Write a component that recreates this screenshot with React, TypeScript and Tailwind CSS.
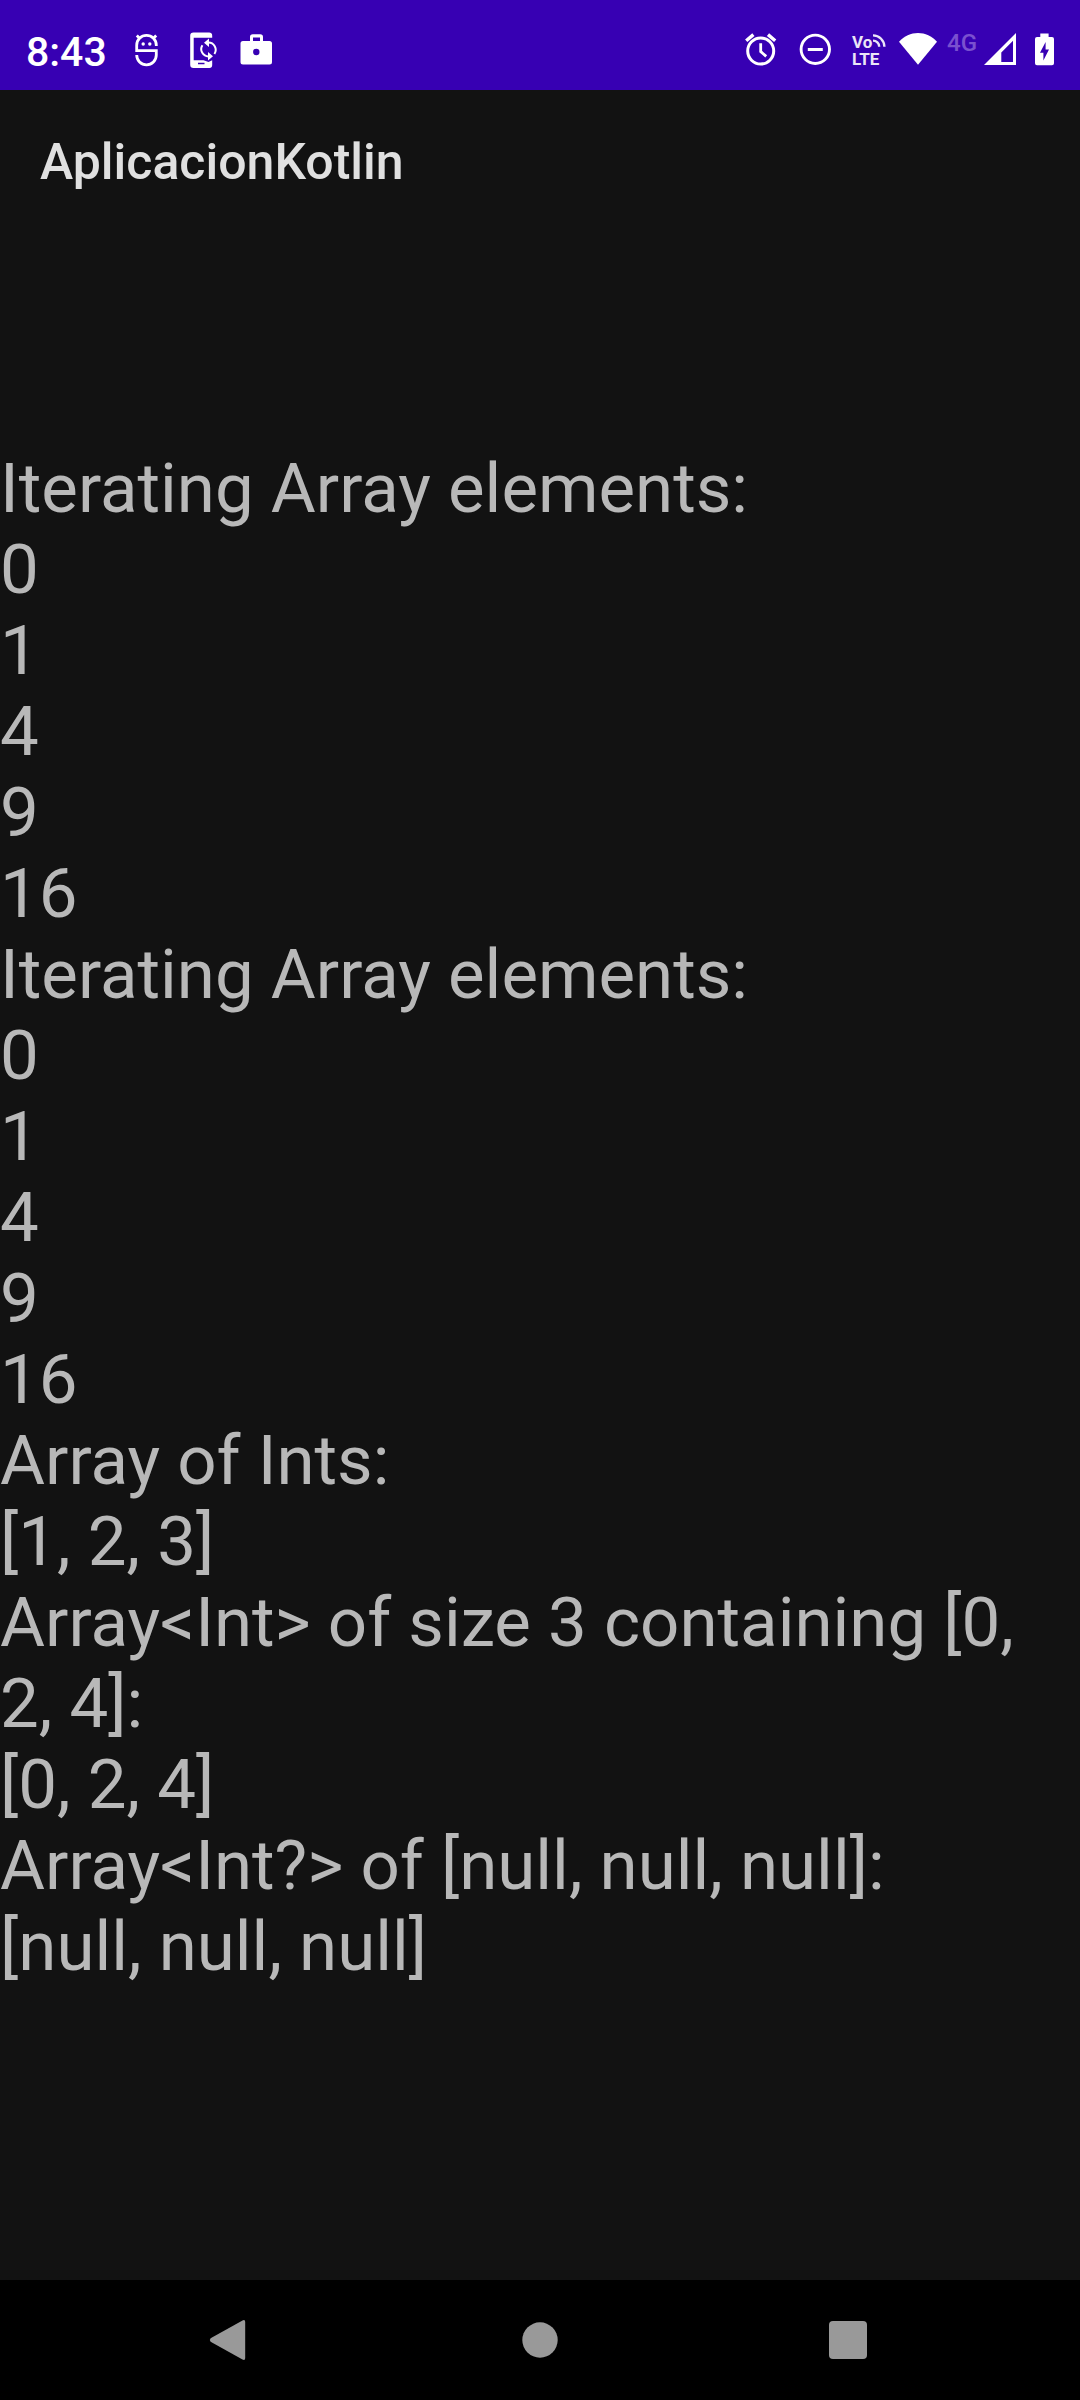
import type { ReactNode } from "react";

const lines = [
  "Iterating Array elements:",
  "0",
  "1",
  "4",
  "9",
  "16",
  "Iterating Array elements:",
  "0",
  "1",
  "4",
  "9",
  "16",
  "Array of Ints:",
  "[1, 2, 3]",
  "Array<Int> of size 3 containing [0, 2, 4]:",
  "[0, 2, 4]",
  "Array<Int?> of [null, null, null]:",
  "[null, null, null]",
];

function StatusIcon({ label, children }: { label: string; children: ReactNode }) {
  return (
    <svg role="img" aria-label={label} viewBox="0 0 36 40" className="h-10 w-9 shrink-0" fill="currentColor">
      {children}
    </svg>
  );
}

function StatusBar() {
  return (
    <header className="flex h-[90px] items-center justify-between bg-[#3700b3] px-[26px] pt-2 text-white">
      <div className="flex items-center gap-[19px]">
        <time className="w-[83px] pt-1.5 text-[41px] leading-10 font-medium">8:43</time>
        <StatusIcon label="Android tools">
          <g fill="none" stroke="currentColor" strokeWidth="2.8">
            <path d="M28.3 17V16.2A9.8 9.8 0 0 0 8.7 16.2V21.6H28.3V26A9.8 9.8 0 0 1 8.7 26" />
            <path d="M11.8 9.6L8.8 6.6M25.2 9.6L28.2 6.6" />
          </g>
          <circle cx="15.2" cy="15" r="1.7" />
          <circle cx="21.8" cy="15" r="1.7" />
        </StatusIcon>
        <StatusIcon label="Phone sync">
          <path
            fillRule="evenodd"
            d="M10.5 3.5H26A3 3 0 0 1 29.2 6.7V8.7H10.7V31.3H20.5L25.5 33L29.2 31.3V36A3 3 0 0 1 26 39H10.5A3.3 3.3 0 0 1 7.2 35.7V6.8A3.3 3.3 0 0 1 10.5 3.5ZM15 33.8V35.2H21.5V33.8Z"
          />
          <g fill="none" stroke="currentColor" strokeWidth="2">
            <path d="M25 13.6A7.3 7.3 0 0 1 31.4 25" />
            <path d="M19.4 16.2A7.3 7.3 0 0 0 26 27.4" />
          </g>
          <path d="M21 13.7L26 9.4V18ZM30 27.3L25 23V31.6Z" />
        </StatusIcon>
        <StatusIcon label="Work profile">
          <path
            fillRule="evenodd"
            d="M5 12H12V8A2.8 2.8 0 0 1 14.8 5.2H22.2A2.8 2.8 0 0 1 25 8V12H31.5A2.5 2.5 0 0 1 34 14.5V33A2.5 2.5 0 0 1 31.5 35.5H5A2.5 2.5 0 0 1 2.5 33V14.5A2.5 2.5 0 0 1 5 12ZM15 8.4V12H22V8.4ZM18.3 19.8A3.2 3.2 0 1 0 18.3 26.2A3.2 3.2 0 1 0 18.3 19.8Z"
          />
        </StatusIcon>
      </div>

      <div className="flex items-center">
        <div className="flex items-center gap-[19px]">
          <StatusIcon label="Alarm set">
            <g fill="none" stroke="currentColor" strokeWidth="3">
              <circle cx="18.7" cy="22" r="13" />
              <path d="M4.2 11.8L11.4 5.6M26 5.6L33.2 11.8" strokeWidth="3.4" />
              <path d="M18.7 14.2V22.6L24.2 27.4" strokeWidth="2.8" />
            </g>
          </StatusIcon>
          <StatusIcon label="Do not disturb">
            <circle cx="18.3" cy="20.3" r="14.2" fill="none" stroke="currentColor" strokeWidth="2.9" />
            <path d="M10.8 19H25.8V22H10.8Z" />
          </StatusIcon>
          <div className="relative w-9 pt-1 text-[17px] leading-[17px] font-bold text-[#ebe5f7]">
            <div>Vo</div>
            <div>LTE</div>
            <svg
              viewBox="0 0 14 14"
              className="absolute top-1 right-0.5 size-3.5"
              fill="none"
              stroke="currentColor"
              strokeWidth="2.4"
            >
              <path d="M1 1.4A11.4 11.4 0 0 1 12.4 12.8M1 6.6A6.2 6.2 0 0 1 7.2 12.8" />
            </svg>
          </div>
        </div>
        <div className="ml-[11px] flex items-center">
          <svg role="img" aria-label="Wi-Fi" viewBox="0 0 38 40" className="h-10 w-[38px]" fill="currentColor">
            <path d="M0 12.8C5 7 12 4 19 4S33 7 38 12.8L19 35.8Z" />
          </svg>
          <span className="ml-2.5 h-10 w-[27px] text-[24px] leading-[28px] font-medium text-[#7a50cf]">4G</span>
          <svg role="img" aria-label="Signal" viewBox="0 0 32 40" className="ml-2.5 h-10 w-8" fill="currentColor">
            <path fillRule="evenodd" d="M0 36L32 4V36ZM17.3 23.6V33H29V11.8Z" />
          </svg>
          <svg
            role="img"
            aria-label="Battery charging"
            viewBox="0 0 19 40"
            className="ml-[19px] h-10 w-[19px]"
            fill="currentColor"
          >
            <path
              fillRule="evenodd"
              d="M5.3 4.6H13.6V8H17A2 2 0 0 1 19 10V34.3A2 2 0 0 1 17 36.3H2A2 2 0 0 1 0 34.3V10A2 2 0 0 1 2 8H5.3ZM10.6 13L5 23.8H8.4V31.4L14 20.4H10.6Z"
            />
          </svg>
        </div>
      </div>
    </header>
  );
}

function NavigationBar() {
  const button = "flex flex-1 items-center justify-center";
  return (
    <nav className="flex h-[120px] bg-black px-[78px] text-[#999999]">
      <button type="button" aria-label="Back" className={button}>
        <svg viewBox="0 0 50 50" className="size-[50px]" fill="currentColor">
          <path d="M3.6 23.2L35.5 5.4Q38.2 4.2 38.2 7V43Q38.2 45.8 35.5 44.6L3.6 26.8Q2 25 3.6 23.2Z" />
        </svg>
      </button>
      <button type="button" aria-label="Home" className={button}>
        <svg viewBox="0 0 50 50" className="size-[50px]" fill="currentColor">
          <circle cx="25" cy="25" r="17.7" />
        </svg>
      </button>
      <button type="button" aria-label="Recent apps" className={button}>
        <svg viewBox="0 0 50 50" className="size-[50px]" fill="currentColor">
          <rect x="6" y="6" width="38" height="38" rx="4" />
        </svg>
      </button>
    </nav>
  );
}

export default function App() {
  return (
    <div className="flex min-h-screen flex-col bg-[#121212] font-[Roboto,sans-serif]">
      <StatusBar />
      <div className="flex h-[140px] items-center px-10 pt-1">
        <h1 className="text-[50px] leading-[60px] font-medium text-[#e0e0e0]">AplicacionKotlin</h1>
      </div>
      <main className="flex-1 pt-[218px] text-[69px] leading-[81px] text-[#b8b8b8]">
        {lines.map((line, index) => (
          <p key={index}>{line}</p>
        ))}
      </main>
      <NavigationBar />
    </div>
  );
}
